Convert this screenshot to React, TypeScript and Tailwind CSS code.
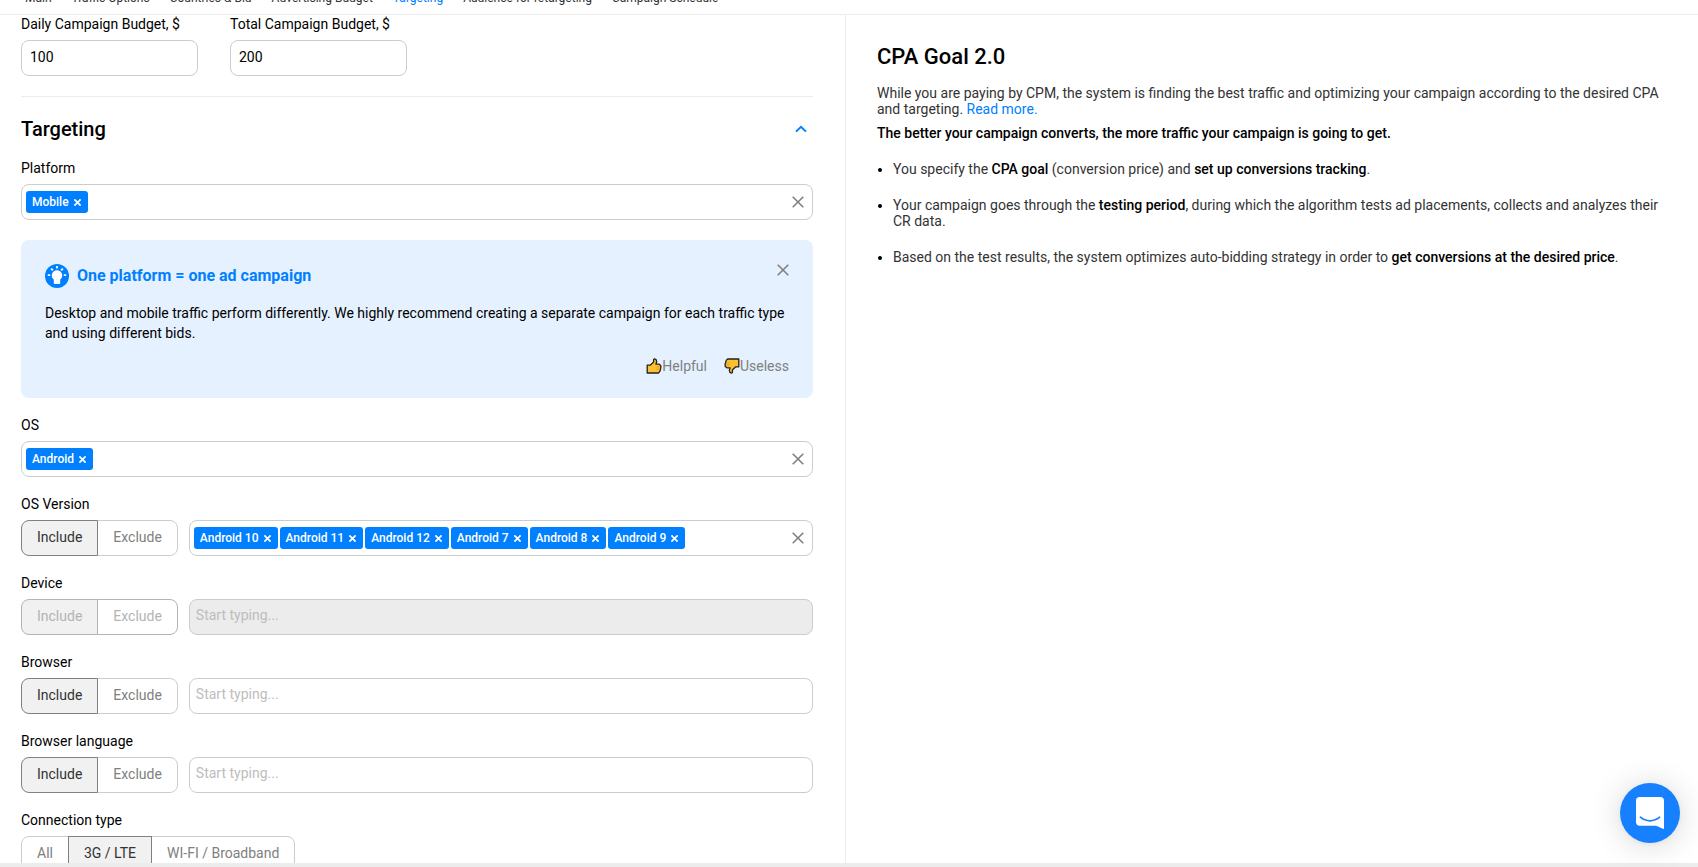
import { useState } from "react";
import type { ReactNode } from "react";

const navItems = ["Main", "Traffic Options", "Countries & Bid", "Advertising Budget", "Targeting", "Audience for retargeting", "Campaign Schedule"];

function CrossIcon({ className }: { className: string }) {
  return (
    <svg viewBox="0 0 12 12" fill="none" stroke="currentColor" strokeWidth="1.6" className={className} aria-hidden="true">
      <path d="M0.7 0.7L11.3 11.3M11.3 0.7L0.7 11.3" />
    </svg>
  );
}

function BulbIcon() {
  return (
    <svg viewBox="0 0 24 24" className="size-6" aria-hidden="true">
      <circle cx="12" cy="12" r="12" fill="#0080ff" />
      <path d="M12 6.2a5.2 5.2 0 0 0-3.2 9.300V19a1 1 0 0 0 1 1h4.400a1 1 0 0 0 1-1v-3.500A5.200 5.200 0 0 0 12 6.200z" fill="#fff" />
      <path d="M12 2v2.400M6.200 4.600l1.600 1.800M17.800 4.600l-1.600 1.800M2.800 11.200h2.400M18.800 11.200h2.400" stroke="#fff" strokeWidth="1.8" />
    </svg>
  );
}

function ThumbIcon({ down = false }: { down?: boolean }) {
  return (
    <svg viewBox="0 0 16 16" className={down ? "size-4 rotate-180" : "size-4"} aria-hidden="true">
      <path d="M1.200 7.200h3L7.600 4V1.600l1-.8 1.500.8.6 2-.8 2.600h3.300l1.500 1.200.2 1.400-.2 1.600-.4 1.400-.5 1.800-1.400 1.400H1.200z" fill="#fdc02f" stroke="#222" strokeWidth="1.3" strokeLinejoin="round" />
      <path d="M10.400 8.800h3.400M10.400 11h3.200" stroke="#e59a1c" strokeWidth="0.9" />
    </svg>
  );
}

function Field({ label, id, children }: { label: string; id: string; children: ReactNode }) {
  return (
    <div className="mb-[17px]">
      <label htmlFor={id} className="mb-1.5 block leading-5">{label}</label>
      {children}
    </div>
  );
}

function TagInput({ id, initial = [], disabled = false }: { id: string; initial?: string[]; disabled?: boolean }) {
  const [tags, setTags] = useState(initial);

  return (
    <div className={`flex h-9 min-w-0 flex-1 items-center gap-0.5 rounded-lg border border-[#ccc] pr-2 pl-1 ${disabled ? "bg-[#ececec]" : "bg-white"}`}>
      {tags.map((tag) => (
        <span key={tag} className="flex h-[22px] shrink-0 items-center gap-1 rounded-[3px] bg-[#0080ff] px-1.5 text-xs font-medium text-white">
          {tag}
          <button type="button" aria-label={`Remove ${tag}`} onClick={() => setTags(tags.filter((item) => item !== tag))} className="flex h-3 w-[9px] items-center justify-center">
            <CrossIcon className="size-[7px] stroke-[3]" />
          </button>
        </span>
      ))}
      <input id={id} type="text" disabled={disabled} placeholder={tags.length === 0 ? "Start typing..." : ""} className="h-8 min-w-0 flex-1 bg-transparent px-0.5 pb-1 outline-none placeholder:text-[#bdbdbd]" />
      {tags.length > 0 && (
        <button type="button" aria-label="Clear all" onClick={() => setTags([])} className="text-[#808080]">
          <CrossIcon className="size-3" />
        </button>
      )}
    </div>
  );
}

function Segmented({ options, initial, disabled = false }: { options: string[]; initial: string; disabled?: boolean }) {
  const [selected, setSelected] = useState(initial);

  return (
    <div className="flex shrink-0">
      {options.map((option) => {
        const active = option === selected;
        const tone = disabled
          ? `border-[#b3b3b3] text-[#b3b3b3] ${active ? "bg-[#f1f1f1]" : "bg-white"}`
          : active
            ? "z-10 border-[#808080] bg-[#f1f1f1] text-[#333]"
            : "border-[#ccc] bg-white text-[#808080]";
        return (
          <button key={option} type="button" disabled={disabled} aria-pressed={active} onClick={() => setSelected(option)} className={`relative -ml-px h-9 border px-[15px] pb-0.5 first:ml-0 first:rounded-l-lg last:rounded-r-lg ${tone}`}>
            {option}
          </button>
        );
      })}
    </div>
  );
}

function TargetField({ label, id, tags, disabled = false }: { label: string; id: string; tags?: string[]; disabled?: boolean }) {
  return (
    <Field label={label} id={id}>
      <div className="flex gap-[11px]">
        <Segmented options={["Include", "Exclude"]} initial="Include" disabled={disabled} />
        <TagInput id={id} initial={tags} disabled={disabled} />
      </div>
    </Field>
  );
}

function BudgetField({ label, id, value }: { label: string; id: string; value: string }) {
  return (
    <div className="w-[177px]">
      <label htmlFor={id} className="mb-[7px] block leading-[18px] whitespace-nowrap">{label}</label>
      <input id={id} type="text" defaultValue={value} className="h-9 w-full rounded-lg border border-[#ccc] px-2 pb-0.5 outline-none" />
    </div>
  );
}

function PlatformTip() {
  const [open, setOpen] = useState(true);
  if (!open) return null;

  return (
    <div className="mt-5 mb-[17px] rounded-lg bg-[#e5f1ff] px-6 pt-6 pb-[22px]">
      <div className="flex items-start gap-2">
        <BulbIcon />
        <h3 className="flex-1 text-base leading-6 font-bold text-[#0080ff]">One platform = one ad campaign</h3>
        <button type="button" aria-label="Close tip" onClick={() => setOpen(false)} className="text-[#808080]">
          <CrossIcon className="size-3" />
        </button>
      </div>
      <p className="mt-[15px] leading-5">Desktop and mobile traffic perform differently. We highly recommend creating a separate campaign for each traffic type and using different bids.</p>
      <div className="mt-[13px] flex justify-end gap-[17px] leading-5 text-[#808080]">
        <button type="button" className="flex items-center"><ThumbIcon />Helpful</button>
        <button type="button" className="flex items-center"><ThumbIcon down />Useless</button>
      </div>
    </div>
  );
}

function GoalInfo() {
  return (
    <aside className="min-w-0 flex-1 pt-7 pr-9 pl-[31px] text-[#333]">
      <h2 className="text-[22px] leading-7 font-medium text-black">CPA Goal 2.0</h2>
      <p className="mt-3.5 leading-4">
        While you are paying by CPM, the system is finding the best traffic and optimizing your campaign according to the desired CPA and targeting. <a href="#cpa-goal" className="text-[#0080ff]">Read more.</a>
      </p>
      <p className="mt-2 leading-4 font-medium text-black">The better your campaign converts, the more traffic your campaign is going to get.</p>
      <ul className="mt-5 list-disc space-y-5 pl-4 leading-4 marker:text-black [&_b]:font-medium [&_b]:text-black">
        <li>You specify the <b>CPA goal</b> (conversion price) and <b>set up conversions tracking</b>.</li>
        <li>Your campaign goes through the <b>testing period</b>, during which the algorithm tests ad placements, collects and analyzes their CR data.</li>
        <li>Based on the test results, the system optimizes auto-bidding strategy in order to <b>get conversions at the desired price</b>.</li>
      </ul>
    </aside>
  );
}

export default function App() {
  const [expanded, setExpanded] = useState(true);

  return (
    <div className="flex h-screen flex-col overflow-hidden bg-white font-[Roboto,sans-serif] text-sm text-black">
      <nav className="flex h-[15px] shrink-0 items-end gap-5 overflow-hidden border-b border-[#ececec] px-[25px] pb-2 text-xs leading-4 whitespace-nowrap">
        {navItems.map((item) => (
          <a key={item} href="#targeting" className={item === "Targeting" ? "text-[#0080ff]" : "text-[#333]"}>{item}</a>
        ))}
      </nav>

      <main className="flex min-h-0 flex-1 overflow-hidden">
        <form className="w-[calc(50%-3px)] shrink-0 border-r border-[#ececec] pr-8 pl-[21px]">
          <div className="flex gap-8 border-b border-[#ececec] pb-5">
            <BudgetField label="Daily Campaign Budget, $" id="daily-budget" value="100" />
            <BudgetField label="Total Campaign Budget, $" id="total-budget" value="200" />
          </div>

          <div className="mt-[18px] mb-[15px] flex items-center justify-between">
            <h2 className="text-xl leading-7 font-medium">Targeting</h2>
            <button type="button" aria-label="Toggle targeting" aria-expanded={expanded} onClick={() => setExpanded(!expanded)} className="px-1.5 text-[#0080ff]">
              <svg viewBox="0 0 12 8" fill="none" stroke="currentColor" strokeWidth="2" className={expanded ? "h-2 w-3" : "h-2 w-3 rotate-180"} aria-hidden="true">
                <path d="M1 6.6L6 1.8l5 4.8" />
              </svg>
            </button>
          </div>

          {expanded && (
            <div id="targeting">
              <Field label="Platform" id="platform"><TagInput id="platform" initial={["Mobile"]} /></Field>
              <PlatformTip />
              <Field label="OS" id="os"><TagInput id="os" initial={["Android"]} /></Field>
              <TargetField label="OS Version" id="os-version" tags={["Android 10", "Android 11", "Android 12", "Android 7", "Android 8", "Android 9"]} />
              <TargetField label="Device" id="device" disabled />
              <TargetField label="Browser" id="browser" />
              <TargetField label="Browser language" id="browser-language" />
              <div role="group" aria-labelledby="connection-type">
                <p id="connection-type" className="mb-1.5 leading-5">Connection type</p>
                <Segmented options={["All", "3G / LTE", "WI-FI / Broadband"]} initial="3G / LTE" />
              </div>
            </div>
          )}
        </form>
        <GoalInfo />
      </main>
      <div className="h-1 shrink-0 bg-[#ececec]" />

      <button type="button" aria-label="Open chat" className="fixed right-[18px] bottom-6 flex size-15 items-center justify-center rounded-full bg-[#1680ff] shadow-[0_2px_32px_rgba(0,0,0,0.16),0_1px_6px_rgba(0,0,0,0.06)]">
        <svg viewBox="0 0 28 32" className="h-8 w-7" aria-hidden="true">
          <path d="M28 32s-4.700-1.900-8-3.300H3.400C1.500 28.700 0 27.200 0 25.300V3.400C0 1.500 1.500 0 3.400 0h21.200C26.500 0 28 1.500 28 3.400z" fill="#fff" />
          <path d="M4.400 20.200C10 25 18 25 23.600 20.200" fill="none" stroke="#1680ff" strokeWidth="1.7" strokeLinecap="round" />
        </svg>
      </button>
    </div>
  );
}
